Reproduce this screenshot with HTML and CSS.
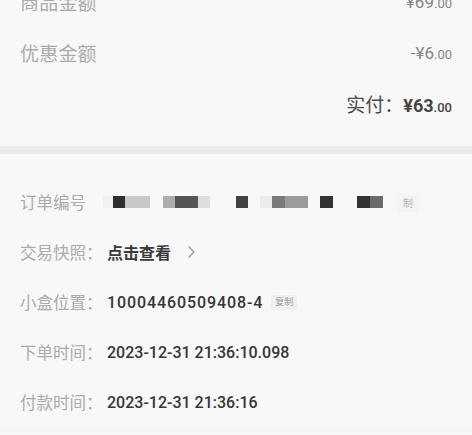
FILE: index.html
```
<!DOCTYPE html>
<html lang="zh-CN">
<head>
<meta charset="utf-8">
<link rel="stylesheet" href="styles.css">
</head>
<body>
<section class="card summary">
  <div class="srow first">
    <span class="slabel">商品金额</span>
    <span class="sval"><span class="big">¥69</span><span class="small">.00</span></span>
  </div>
  <div class="srow">
    <span class="slabel">优惠金额</span>
    <span class="sval"><span class="big">-¥6</span><span class="small">.00</span></span>
  </div>
  <div class="srow total">
    <span class="paid"><span class="paid-label">实付：</span><span class="big">¥63</span><span class="small">.00</span></span>
  </div>
</section>
<div class="divider"></div>
<section class="card info">
  <div class="irow">
    <span class="ilabel">订单编号</span>
    <span class="mosaic">
      <i class="m w10 c-f"></i><i class="m w12 c1"></i><i class="m w25 c-c"></i>
      <i class="m gap13"></i>
      <i class="m w12 c-a"></i><i class="m w23 c5"></i><i class="m w12 c-d"></i>
      <i class="m gap26"></i>
      <i class="m w12 c4"></i>
      <i class="m gap12"></i>
      <i class="m w12 c-e"></i><i class="m w13 c7"></i><i class="m w23 c9"></i>
      <i class="m gap12"></i>
      <i class="m w13 c3"></i>
      <i class="m gap24"></i>
      <i class="m w13 c3"></i><i class="m w13 c6"></i>
      <span class="fade-copy">制</span>
    </span>
  </div>
  <div class="irow">
    <span class="ilabel">交易快照：</span>
    <span class="ival strong">点击查看</span>
    <svg class="chev" width="9" height="14" viewBox="0 0 9 14"><path d="M2 2 L7 7 L2 12" fill="none" stroke="#9a9a9a" stroke-width="1.4" stroke-linecap="round" stroke-linejoin="round"/></svg>
  </div>
  <div class="irow">
    <span class="ilabel">小盒位置：</span>
    <span class="ival wide">10004460509408-4</span>
    <span class="copy">复制</span>
  </div>
  <div class="irow">
    <span class="ilabel">下单时间：</span>
    <span class="ival">2023-12-31 21:36:10.098</span>
  </div>
  <div class="irow">
    <span class="ilabel">付款时间：</span>
    <span class="ival">2023-12-31 21:36:16</span>
  </div>
</section>
</body>
</html>
```
FILE: styles.css
```
* { box-sizing: border-box; margin: 0; padding: 0; }
html, body {
  width: 472px;
  height: 435px;
  overflow: hidden;
  background: #f7f7f7;
}
body {
  font-family: Roboto, "Noto Sans CJK SC", sans-serif;
  color: #333;
}
.card {
  background: #f8f8f8;
  padding: 0 20px;
}
.summary {
  margin-top: -24px;
  padding-bottom: 17px;
}
.srow {
  height: 51px;
  display: flex;
  align-items: center;
  justify-content: space-between;
}
.slabel {
  font-size: 19px;
  color: #ababab;
  letter-spacing: 0.2px;
}
.sval {
  color: #858585;
  display: flex;
  align-items: baseline;
}
.sval .big { font-size: 17px; }
.sval .small { font-size: 13px; }
.total { justify-content: flex-end; }
.paid {
  display: flex;
  align-items: baseline;
  color: #444;
}
.paid-label { font-size: 19px; color: #4a4a4a; }
.paid .big { font-size: 18px; font-weight: 700; }
.paid .small { font-size: 13px; font-weight: 500; }
.divider {
  height: 8px;
  background: #ececec;
}
.info {
  padding-top: 23px;
}
.irow {
  height: 50px;
  display: flex;
  align-items: center;
}
.ilabel {
  width: 87px;
  flex: none;
  font-size: 16.5px;
  color: #ababab;
}
.ival {
  font-size: 16px;
  font-weight: 500;
  color: #353535;
}
.ival.wide { letter-spacing: 0.9px; }
.ival.strong {
  font-weight: 700;
  color: #3a3a3a;
}
.chev { margin-left: 16px; }
.copy {
  margin-left: 8px;
  background: #f0f0f0;
  color: #9a9a9a;
  font-size: 9px;
  padding: 2px 4px;
  border-radius: 2px;
  line-height: 11px;
}
.mosaic {
  display: flex;
  align-items: center;
  margin-left: -4px;
  height: 13px;
}
.m { display: block; height: 12px; }
.w10 { width: 10px; }
.w12 { width: 12px; }
.w13 { width: 13px; }
.w23 { width: 23px; }
.w25 { width: 25px; }
.gap12 { width: 12px; }
.gap13 { width: 13px; }
.gap24 { width: 24px; }
.gap26 { width: 26px; }
.c1 { background: #2e2e2e; }
.c3 { background: #333; }
.c4 { background: #424242; }
.c5 { background: #555; }
.c6 { background: #6a6a6a; }
.c7 { background: #7a7a7a; }
.c9 { background: #9c9c9c; }
.c-a { background: #adadad; }
.c-c { background: #c8c8c8; }
.c-d { background: #dedede; }
.c-e { background: #ececec; }
.c-f { background: #f1f1f1; }
.fade-copy {
  margin-left: 14px;
  font-size: 10px;
  color: #b5b5b5;
  background: #f3f3f3;
  padding: 2px 6px;
}
```
